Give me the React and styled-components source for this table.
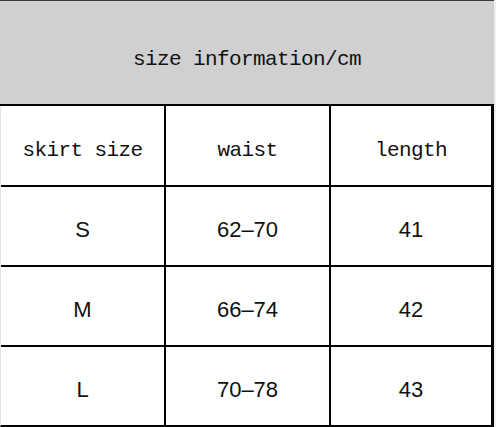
import React from 'react';
import styled, { createGlobalStyle } from 'styled-components';

const GlobalStyle = createGlobalStyle`
  html, body {
    margin: 0;
    padding: 0;
    background: #eeeeee;
  }
`;

const Sheet = styled.div`
  width: 494px;
  height: 427px;
  background: #ffffff;
  display: flex;
  flex-direction: column;
`;

const Banner = styled.div`
  height: 106px;
  box-sizing: border-box;
  border-top: 1px solid #3a3a3a;
  border-bottom: 2px solid #000;
  background: #d0d0d0;
  display: flex;
  align-items: center;
  justify-content: center;
  padding-top: 13px;
  font-family: 'Liberation Mono', 'DejaVu Sans Mono', monospace;
  font-size: 21px;
  letter-spacing: -0.6px;
  color: #111;
`;

const Grid = styled.div`
  display: grid;
  grid-template-columns: 163px 163px 160px;
  grid-template-rows: 79px 78px 78px 78px;
  gap: 2px;
  background: #000;
  border-left: 1px solid #e4e4e4;
  border-right: 3px solid #000;
  border-bottom: 2px solid #000;
`;

const Cell = styled.div`
  background: #fff;
  display: flex;
  align-items: center;
  justify-content: center;
  padding-top: ${props => (props.head ? '9px' : '8px')};
  box-sizing: border-box;
  color: #111;
  font-family: ${props =>
    props.head
      ? "'Liberation Mono', 'DejaVu Sans Mono', monospace"
      : "'Liberation Sans', Arial, sans-serif"};
  font-size: ${props => (props.head ? '21px' : '22px')};
  letter-spacing: ${props => (props.head ? '-0.6px' : '0')};
`;

const heads = ['skirt size', 'waist', 'length'];

const rows = [
  ['S', '62–70', '41'],
  ['M', '66–74', '42'],
  ['L', '70–78', '43'],
];

const App = () => {
  return (
    <>
      <GlobalStyle />
      <Sheet>
        <Banner>size information/cm</Banner>
        <Grid>
          {heads.map(h => (
            <Cell head key={h}>
              {h}
            </Cell>
          ))}
          {rows.map(row =>
            row.map((value, i) => <Cell key={row[0] + i}>{value}</Cell>)
          )}
        </Grid>
      </Sheet>
    </>
  );
};

export default App;
